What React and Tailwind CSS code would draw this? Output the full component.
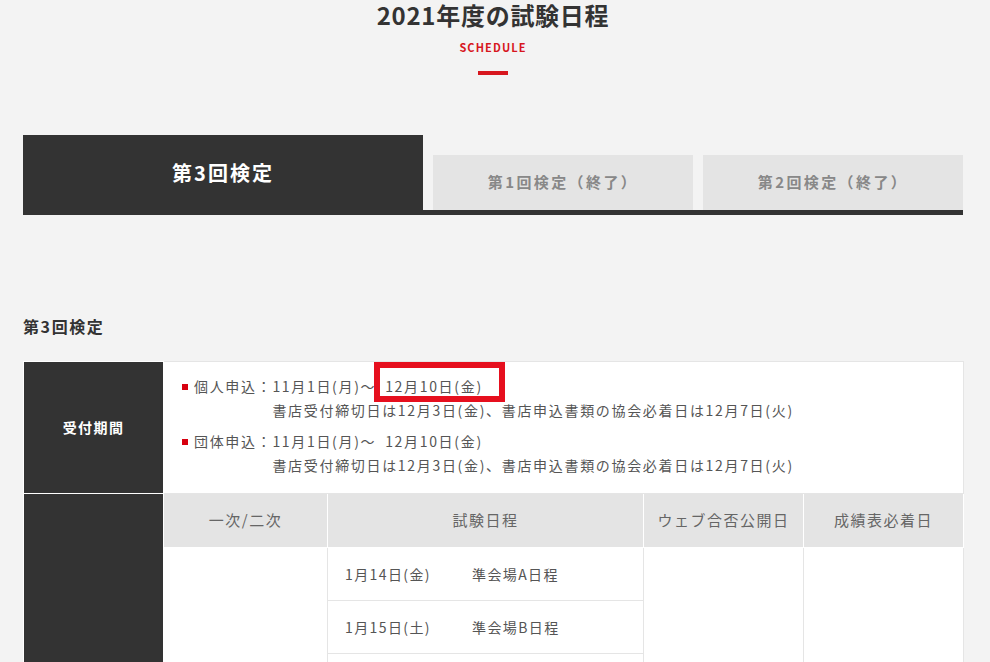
import React from 'react';

const font = { fontFamily: '"Noto Sans CJK JP", "Noto Sans", sans-serif' };

const tabs = [
  { label: '第3回検定', active: true },
  { label: '第1回検定（終了）', active: false },
  { label: '第2回検定（終了）', active: false },
];

const rows = [
  { date: '1月14日(金)', place: '準会場A日程' },
  { date: '1月15日(土)', place: '準会場B日程' },
  { date: '1月16日(日)', place: '本会場' },
  { date: '1月21日(金)', place: '準会場C日程' },
  { date: '1月22日(土)', place: '準会場D日程' },
  { date: '1月23日(日)', place: '準会場E日程' },
];

const Entry = ({ label, children, note, first }) => (
  <div className={`flex ${first ? '' : 'mt-[7px]'}`}>
    <span className="w-[6px] h-[6px] bg-[#d7000f] mt-[10px] mr-[6px] shrink-0" />
    <span className="shrink-0 whitespace-nowrap">{label}</span>
    <div>
      <div>{children}</div>
      <div>{note}</div>
    </div>
  </div>
);

export default function App() {
  return (
    <div className="min-h-screen bg-[#f3f3f3] text-[#333]" style={font}>
      <div className="ml-[23px] w-[940px] pb-20">
        {/* Heading */}
        <div className="flex flex-col items-center">
          <h1 className="text-[24px] leading-[30px] font-bold tracking-[0.03em] text-[#333]">
            2021年度の試験日程
          </h1>
          <p className="mt-[9px] text-[11px] leading-[16px] font-bold tracking-[0.1em] text-[#d7161e]">
            SCHEDULE
          </p>
          <span className="mt-[16px] w-[30px] h-[4px] bg-[#d7161e]" />
        </div>

        {/* Tabs */}
        <div className="mt-[60px] flex items-end border-b-[5px] border-[#333]">
          {tabs.map((t) =>
            t.active ? (
              <div
                key={t.label}
                className="w-[400px] h-[75px] bg-[#333] flex items-center justify-center text-white text-[20px] font-bold tracking-[0.1em]"
              >
                {t.label}
              </div>
            ) : (
              <div
                key={t.label}
                className="ml-[10px] w-[260px] h-[55px] bg-[#e4e4e4] flex items-center justify-center text-[#888] text-[15px] font-bold tracking-[0.16em]"
              >
                {t.label}
              </div>
            )
          )}
        </div>

        <h2 className="mt-[99px] text-[16px] leading-[24px] font-bold tracking-[0.1em] text-[#333]">
          第3回検定
        </h2>

        {/* Schedule table */}
        <table className="mt-[23px] w-full table-fixed border-collapse">
          <colgroup>
            <col className="w-[140px]" />
            <col className="w-[164px]" />
            <col className="w-[316px]" />
            <col className="w-[160px]" />
            <col className="w-[160px]" />
          </colgroup>
          <tbody>
            <tr>
              <th className="bg-[#333] text-white text-[14px] font-bold tracking-[0.1em] border border-white">
                受付期間
              </th>
              <td
                colSpan={4}
                className="bg-white border border-[#e5e5e5] pl-[18px] pt-[12px] pb-[16px] text-[14px] leading-[24px] tracking-[0.12em] text-[#555]"
              >
                <Entry
                  first
                  label="個人申込："
                  note="書店受付締切日は12月3日(金)、書店申込書類の協会必着日は12月7日(火)"
                >
                  11月1日(月)～{' '}
                  <span className="relative ml-[4px]">
                    12月10日(金)
                    <span className="absolute -left-[11px] -right-[22px] -top-[14px] -bottom-[6px] border-[6px] border-[#e60f1e]" />
                  </span>
                </Entry>
                <Entry
                  label="団体申込："
                  note="書店受付締切日は12月3日(金)、書店申込書類の協会必着日は12月7日(火)"
                >
                  11月1日(月)～ <span className="ml-[4px]">12月10日(金)</span>
                </Entry>
              </td>
            </tr>
            <tr>
              <th
                rowSpan={rows.length + 1}
                className="bg-[#333] text-white text-[14px] font-bold tracking-[0.1em] border border-white"
              >
                試験日
              </th>
              {['一次/二次', '試験日程', 'ウェブ合否公開日', '成績表必着日'].map((h) => (
                <th
                  key={h}
                  className="h-[54px] bg-[#e4e4e4] border border-white text-[15px] font-normal tracking-[0.1em] text-[#666]"
                >
                  {h}
                </th>
              ))}
            </tr>
            {rows.map((r, i) => (
              <tr key={r.date}>
                {i === 0 && (
                  <td
                    rowSpan={rows.length}
                    className="bg-white border border-[#e5e5e5] text-center text-[14px] tracking-[0.1em] text-[#555]"
                  >
                    一次
                  </td>
                )}
                <td className="h-[53px] bg-white border border-[#e5e5e5] pl-[17px] text-[14px] tracking-[0.1em] text-[#555]">
                  <span className="inline-block w-[127px]">{r.date}</span>
                  {r.place}
                </td>
                {i === 0 && (
                  <>
                    <td
                      rowSpan={rows.length}
                      className="bg-white border border-[#e5e5e5] text-center text-[14px] tracking-[0.1em] text-[#555]"
                    >
                      2月8日(火)
                    </td>
                    <td
                      rowSpan={rows.length}
                      className="bg-white border border-[#e5e5e5] text-center text-[14px] tracking-[0.1em] text-[#555]"
                    >
                      2月10日(木)
                    </td>
                  </>
                )}
              </tr>
            ))}
          </tbody>
        </table>
      </div>
    </div>
  );
}
